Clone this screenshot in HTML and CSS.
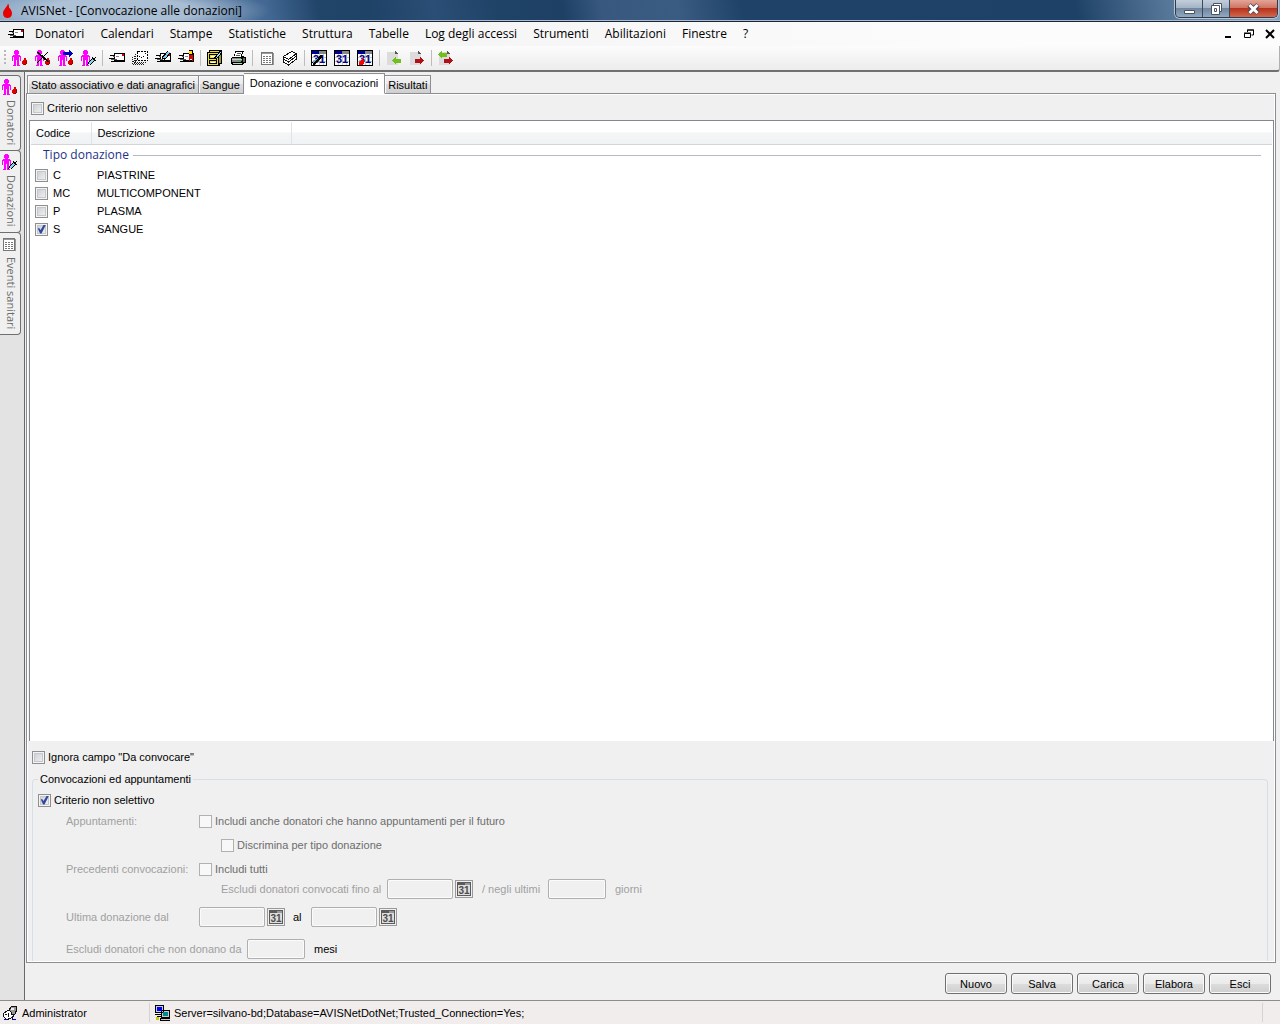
FILE: index.html
```html
<!DOCTYPE html>
<html lang="it">
<head>
<meta charset="utf-8">
<title>AVISNet - [Convocazione alle donazioni]</title>
<link rel="stylesheet" href="styles.css">
</head>
<body>
<svg class="sprite" aria-hidden="true">
  <symbol id="person" viewBox="0 0 16 16">
    <path fill="#f0f" d="M4 0h3v1h1v3h-1v1h-3v-1h-1v-3h1zM2 5h7v1h1v5h-1v-4h-1v8h1v1h-3v-6h-1v6h-3v-1h1v-8h-1v4h-1v-5h1z"/>
  </symbol>
  <symbol id="blood" viewBox="0 0 16 16">
    <path fill="#e00000" d="M13 8h2v2h1v4h-1v1h-3v-1h-1v-3h1v-1h1z"/><path fill="#900" d="M15 11h1v3h-1v1h-2v-1h2z"/>
  </symbol>
  <symbol id="donor" viewBox="0 0 16 16"><use href="#person"/><use href="#blood"/></symbol>
  <symbol id="donor-del" viewBox="0 0 16 16"><use href="#person"/><use href="#blood"/><path stroke="#000" fill="none" d="M3 2l11 10M14 2L3 13M4 2l11 10"/></symbol>
  <symbol id="donor-move" viewBox="0 0 16 16"><use href="#person"/><use href="#blood"/><path fill="#0000b8" d="M6 2h6v-2h1v1h1v1h1v1h1v1h-1v1h-1v1h-1v1h-1v-2h-6z"/></symbol>
  <symbol id="syringe" viewBox="0 0 16 16"><path stroke="#000" stroke-width="4" d="M9 14l5-5"/><path stroke="#7fd4f0" stroke-width="2" d="M9 14l4-4"/><path stroke="#000" d="M7 15l2-2M12 7l4 4M14 9l2-2"/></symbol>
  <symbol id="donor-syringe" viewBox="0 0 16 16"><use href="#person"/><use href="#syringe"/></symbol>
  <symbol id="letter" viewBox="0 0 16 16">
    <path fill="#000" d="M5 3h11v9h-11zM1 5h5v1h-5zM0 8h8v1h-8zM2 11h5v1h-5z"/>
    <path fill="#fff" d="M6 4h9v6h-9z"/><path fill="#555" d="M4 6h2v1h-2zM2 9h6v1h-6z"/>
    <path fill="#888" d="M7 6h3v1h-3z"/><path fill="#c00" d="M13 4h2v2h-2z"/>
  </symbol>
  <symbol id="letters" viewBox="0 0 16 16">
    <path stroke="#222" stroke-dasharray="1 1" fill="none" d="M3.500 4v8.500h10M2 5.500v8h10M.500 7v7.500h11M2 10.500h3M1 11.500h4"/>
    <path fill="#fff" stroke="#000" stroke-dasharray="2 1" d="M5.500 1.500h10v9h-10z"/><path fill="#000" d="M7 6h1v1h-1zM9 7h1v1h-1zM11 6h1v1h-1zM13 3h1v1h-1z"/>
  </symbol>
  <symbol id="letter-pen" viewBox="0 0 16 16"><use href="#letter"/><path stroke="#000" stroke-width="4" d="M8 9l6-7"/><path stroke="#7fc8f0" stroke-width="2" d="M9 8l5-6"/></symbol>
  <symbol id="letter-seal" viewBox="0 0 16 16"><use href="#letter"/><path fill="#d00" d="M11 5h4v6h-1v-2h-2v2h-1z"/><path fill="#000" d="M11 0h4v5h-4z"/><path fill="#fd0" d="M11 1h3v3h-3z"/></symbol>
  <symbol id="cabinet" viewBox="0 0 16 16">
    <path fill="#000" d="M2 0h13v14h-2v2h-13v-14h2z"/><path fill="#e6dc3c" d="M3 1h9v1h-9zM1 3h10v12h-10z"/><path fill="#a39a28" d="M12 3h2v10h-2z"/>
    <path stroke="#000" fill="none" d="M2.500 4.500h7v4h-7zM2.500 10.500h7v3h-7z"/><path fill="#fff" d="M4 6h4v1h-4zM4 12h4v1h-4z"/>
    <path stroke="#000" stroke-width="3" d="M8 9l6-7"/><path stroke="#9be0ff" d="M9 8l5-6"/>
  </symbol>
  <symbol id="printer" viewBox="0 0 16 16">
    <path fill="#000" d="M5 1h9v1h-1l-1 4h2v1h2v6h-2v1h-1v1h-11v-1h-1v-6h1v-1h2z"/><path fill="#fff" d="M6 2h6l-1 5h-7z"/><path fill="#555" d="M7 3h4v1h-4zM6 5h4v1h-4z"/>
    <path fill="#888" d="M2 8h9v4h-9z"/><path fill="#ccc" d="M2 9h10v1h-10zM3 13h9v1h-9z"/><path fill="#0c3" d="M8 10h4v1h-4z"/><path fill="#666" d="M13 8h2v4h-2z"/>
  </symbol>
  <symbol id="sheet" viewBox="0 0 16 16">
    <path fill="#fff" stroke="#777" d="M2.500 2.500h11v12h-11z"/><path stroke="#999" d="M3 3.500h10M14.500 3v12"/><path fill="none" stroke="#777" stroke-dasharray="2 1" d="M4 6.500h8M4 8.500h8M4 10.500h8M4 12.500h8"/>
  </symbol>
  <symbol id="stack" viewBox="0 0 16 16">
    <path fill="#fff" d="M1 6l8-5 6 3v5l-9 6-5-3z"/>
    <path fill="none" stroke="#111" d="M1.500 6.500l8-5 5 2-8 6zM1.500 7v2l5 3 8-6v-2M1.500 10v2l5 3 8-6v-2"/>
  </symbol>
  <symbol id="calendar" viewBox="0 0 16 16">
    <path d="M0 0h16v16h-16z"/><path fill="#fff" d="M1 4h14v11h-14z"/><path fill="#00009a" d="M1 1h7v3h-7z"/><path fill="#888" d="M8 1h7v3h-7z"/>
    <path stroke="#ccc" d="M4.500 4v11M8.500 4v11M12.500 4v11M1 7.500h14M1 11.500h14"/>
  </symbol>
  <symbol id="page" viewBox="0 0 16 16"><path fill="#dcdcdc" d="M1 2h8l3 3v10h-11z"/><path fill="#555" d="M9 1l3 3h-3z"/></symbol>
  <symbol id="page-in" viewBox="0 0 16 16"><use href="#page"/><path fill="#71bf1c" d="M6 10.500l4-4v2h5v4h-5v2z"/></symbol>
  <symbol id="page-out" viewBox="0 0 16 16"><use href="#page"/><path fill="#b01016" d="M15 10.500l-4-4v2h-5v4h5v2z"/></symbol>
  <symbol id="page-both" viewBox="0 0 16 16"><use href="#page"/><path fill="#71bf1c" d="M0 4.500l4-4v2h5v4h-5v2z"/><path fill="#b01016" d="M15 10.500l-4-4v2h-5v4h5v2z"/></symbol>
  <symbol id="calendar-off" viewBox="0 0 14 14">
    <path fill="#5a5a5a" d="M0 0h14v14h-14z"/><path fill="#dedede" d="M1 3h12v10h-12z"/><path fill="#999" d="M8 1h5v2h-5z"/>
  </symbol>
  <symbol id="user" viewBox="0 0 16 16">
    <path fill="#fff" stroke="#111" d="M1.500 8.500l4-3 5 1 1 4-3 3-4 1-3-3z"/><path fill="#999" stroke="#111" d="M7 5l2-3 5-1 1 3-2 5-3 1-1-3z"/><path fill="#eee" d="M9 3h3v2h-3z"/><path stroke="#111" d="M3 9h2M6 8v4M12 10l-2 4"/><path fill="#00c" d="M2 14h3v1h-3zM10 14h4v1h-4z"/>
  </symbol>
  <symbol id="network" viewBox="0 0 16 16">
    <path fill="#ccc" stroke="#000" d="M1.500.500h8v7h-8zM7.500 5.500h8v7h-8zM6 13.500h10v2h-10z"/><path fill="#00f" d="M3 2h5v4h-5z"/><path fill="#008c8c" d="M9 7h5v4h-5z"/><path stroke="#000" d="M1 9.500h6M3 11.500h4"/><path fill="#cc0" d="M2 12h3v3h-3z"/>
  </symbol>
</svg>

<header class="titlebar">
  <svg class="app-icon" viewBox="0 0 12 16"><path fill="#e80000" d="M7 1c-1 4-5 6-5 10 0 6 9 6 9 0 0-3-2-5-3-6 0-1 0-3-1-4z"/></svg>
  <h1>AVISNet - [Convocazione alle donazioni]</h1>
  <div class="window-buttons">
    <button type="button" aria-label="Riduci a icona"><svg width="13" height="14"><path fill="#fff" stroke="#4a5361" d="M1.500 8.500h10v3h-10z"/></svg></button>
    <button type="button" aria-label="Ripristina"><svg width="13" height="14"><path fill="#fff" stroke="#4a5361" d="M3.500 1.500h8v8h-8z"/><path fill="#fff" stroke="#4a5361" d="M1.500 3.500h8v9h-8zM4.500 6.500h2v3h-2z"/></svg></button>
    <button type="button" class="close" aria-label="Chiudi"><svg width="13" height="14"><path stroke="#4a4350" stroke-width="5" d="M2 3l9 8M11 3l-9 8"/><path stroke="#fff" stroke-width="3" d="M2.500 3l8 8M10.500 3l-8 8"/></svg></button>
  </div>
</header>

<nav class="menubar">
  <svg class="icon doc-icon"><use href="#letter"/></svg>
  <button type="button">Donatori</button><button type="button">Calendari</button><button type="button">Stampe</button><button type="button">Statistiche</button><button type="button">Struttura</button><button type="button">Tabelle</button><button type="button">Log degli accessi</button><button type="button">Strumenti</button><button type="button">Abilitazioni</button><button type="button">Finestre</button><button type="button">?</button>
  <div class="child-buttons">
    <button type="button" aria-label="Riduci"><svg width="10" height="10"><path d="M2 7h6v2h-6z"/></svg></button>
    <button type="button" aria-label="Ripristina"><svg width="10" height="10"><path fill="none" stroke="#000" d="M3.500 3v-2h6v5h-2M3 1h7M.500 4.500h6v4h-6zM0 4h7"/></svg></button>
    <button type="button" aria-label="Chiudi"><svg width="10" height="10"><path stroke="#000" stroke-width="2" d="M1 1l8 8M9 1l-8 8"/></svg></button>
  </div>
</nav>

<div class="toolbar" role="toolbar">
  <span class="grip"></span>
  <div class="tools">
    <button type="button" aria-label="Donatore"><svg class="icon"><use href="#donor"/></svg></button>
    <button type="button" aria-label="Elimina donatore"><svg class="icon"><use href="#donor-del"/></svg></button>
    <button type="button" aria-label="Trasferisci donatore"><svg class="icon"><use href="#donor-move"/></svg></button>
    <button type="button" aria-label="Donazione"><svg class="icon"><use href="#donor-syringe"/></svg></button>
  </div>
  <div class="tools">
    <button type="button" aria-label="Lettera"><svg class="icon"><use href="#letter"/></svg></button>
    <button type="button" aria-label="Lettere"><svg class="icon"><use href="#letters"/></svg></button>
    <button type="button" aria-label="Scrivi lettera"><svg class="icon"><use href="#letter-pen"/></svg></button>
    <button type="button" aria-label="Benemerenze"><svg class="icon"><use href="#letter-seal"/></svg></button>
  </div>
  <div class="tools">
    <button type="button" aria-label="Archivio"><svg class="icon"><use href="#cabinet"/></svg></button>
    <button type="button" aria-label="Stampa"><svg class="icon"><use href="#printer"/></svg></button>
  </div>
  <div class="tools">
    <button type="button" aria-label="Elenco"><svg class="icon"><use href="#sheet"/></svg></button>
    <button type="button" aria-label="Schede"><svg class="icon"><use href="#stack"/></svg></button>
  </div>
  <div class="tools">
    <button type="button" aria-label="Modifica calendario"><svg class="icon"><use href="#calendar"/><text class="cal-day" x="8" y="13" text-anchor="middle">31</text><path stroke="#000" stroke-width="3" d="M2 14l9-8"/><path stroke="#3cc" d="M2 13l5-5"/></svg></button>
    <button type="button" aria-label="Calendario"><svg class="icon"><use href="#calendar"/><text class="cal-day" x="8" y="13" text-anchor="middle">31</text></svg></button>
    <button type="button" aria-label="Calendario donazioni"><svg class="icon"><use href="#calendar"/><text class="cal-day" x="8" y="13" text-anchor="middle">31</text><path fill="#f00" d="M5 8h1v2h1v4h-1v1h-4v-3h1v-1h1v-1h1z"/></svg></button>
  </div>
  <div class="tools">
    <button type="button" aria-label="Importa"><svg class="icon"><use href="#page-in"/></svg></button>
    <button type="button" aria-label="Esporta"><svg class="icon"><use href="#page-out"/></svg></button>
  </div>
  <div class="tools">
    <button type="button" aria-label="Scambia"><svg class="icon"><use href="#page-both"/></svg></button>
  </div>
</div>

<div class="workspace">
  <aside class="side-tabs">
    <button type="button"><svg class="icon"><use href="#donor"/></svg><span>Donatori</span></button>
    <button type="button"><svg class="icon"><use href="#donor-syringe"/></svg><span>Donazioni</span></button>
    <button type="button"><svg class="icon"><use href="#sheet"/></svg><span>Eventi sanitari</span></button>
  </aside>

  <main class="child-window">
    <div class="tabs" role="tablist">
      <button type="button" role="tab">Stato associativo e dati anagrafici</button><button type="button" role="tab">Sangue</button><button type="button" role="tab" class="active" aria-selected="true">Donazione e convocazioni</button><button type="button" role="tab">Risultati</button>
    </div>
    <section class="tab-page">
      <label class="check top-check"><input type="checkbox">Criterio non selettivo</label>
      <div class="list">
        <table>
          <thead><tr><th class="code">Codice</th><th class="desc">Descrizione</th><th></th></tr></thead>
          <tbody>
            <tr class="group"><td colspan="3"><div>Tipo donazione</div></td></tr>
            <tr><td><label class="check"><input type="checkbox">C</label></td><td>PIASTRINE</td><td></td></tr>
            <tr><td><label class="check"><input type="checkbox">MC</label></td><td>MULTICOMPONENT</td><td></td></tr>
            <tr><td><label class="check"><input type="checkbox">P</label></td><td>PLASMA</td><td></td></tr>
            <tr><td><label class="check"><input type="checkbox" checked>S</label></td><td>SANGUE</td><td></td></tr>
          </tbody>
        </table>
      </div>
      <label class="check ignore-check"><input type="checkbox">Ignora campo "Da convocare"</label>
      <fieldset>
        <legend>Convocazioni ed appuntamenti</legend>
        <label class="check"><input type="checkbox" checked>Criterio non selettivo</label>
        <div class="criteria">
          <div class="row"><span class="caption">Appuntamenti:</span><label class="check"><input type="checkbox" disabled>Includi anche donatori che hanno appuntamenti per il futuro</label></div>
          <div class="row sub"><label class="check"><input type="checkbox" disabled>Discrimina per tipo donazione</label></div>
          <div class="row"><span class="caption">Precedenti convocazioni:</span><label class="check"><input type="checkbox" disabled>Includi tutti</label></div>
          <div class="row fields sub-fields">
            <label class="until" for="until">Escludi donatori convocati fino al</label>
            <input id="until" class="date" type="text" disabled><button type="button" class="pick" disabled aria-label="Scegli data"><svg><use href="#calendar-off"/><text class="cal-day-off" x="7" y="12" text-anchor="middle">31</text></svg></button>
            <label class="days" for="days">/ negli ultimi</label><input id="days" class="number" type="text" disabled><span class="unit">giorni</span>
          </div>
          <div class="row fields last">
            <label class="caption" for="from">Ultima donazione dal</label>
            <input id="from" class="date" type="text" disabled><button type="button" class="pick" disabled aria-label="Scegli data"><svg><use href="#calendar-off"/><text class="cal-day-off" x="7" y="12" text-anchor="middle">31</text></svg></button>
            <label class="to" for="to">al</label><input id="to" class="date" type="text" disabled><button type="button" class="pick" disabled aria-label="Scegli data"><svg><use href="#calendar-off"/><text class="cal-day-off" x="7" y="12" text-anchor="middle">31</text></svg></button>
          </div>
          <div class="row fields months">
            <label class="not-since" for="months">Escludi donatori che non donano da</label><input id="months" class="number" type="text" disabled><span class="unit on">mesi</span>
          </div>
        </div>
      </fieldset>
    </section>
    <div class="actions">
      <button type="button">Nuovo</button><button type="button">Salva</button><button type="button">Carica</button><button type="button">Elabora</button><button type="button">Esci</button>
    </div>
  </main>
</div>

<footer class="statusbar">
  <div class="user"><svg class="icon"><use href="#user"/></svg>Administrator</div>
  <div class="server"><svg class="icon"><use href="#network"/></svg>Server=silvano-bd;Database=AVISNetDotNet;Trusted_Connection=Yes;</div>
  <div class="end"></div>
</footer>
</body>
</html>
```

FILE: styles.css
```css
* { box-sizing: border-box; }

body {
  margin: 0;
  min-height: 100vh;
  display: flex;
  flex-direction: column;
  background: #f0f0f0;
  color: #000;
  font: 11px/14px "Liberation Sans", Arial, sans-serif;
}

button { margin: 0; padding: 0; border: 0; background: none; color: inherit; font: inherit; }
svg { display: block; flex: none; }
.sprite { display: none; }
.icon { width: 16px; height: 16px; shape-rendering: crispEdges; }
.cal-day { font: bold 11px "Liberation Sans", sans-serif; fill: #00008c; }
.cal-day-off { font: bold 10px "Liberation Sans", sans-serif; fill: #4c4c4c; }

/* Title bar */
.titlebar {
  display: flex;
  align-items: center;
  height: 22px;
  padding-left: 1px;
  border-bottom: 1px solid #1b2535;
  box-shadow: inset 0 -1px #a9bdd2;
  background:
    radial-gradient(ellipse 150px 26px at 120px 11px, rgba(190, 207, 224, .8) 50%, rgba(190, 207, 224, 0)),
    linear-gradient(80deg, #7f9dbe 0, #54779f 14%, #426893 21%, #214469 25%, #1f4267 29%, #2b4e76 34%, #1f4267 39%, #1e4065 44%, #38587f 47%, #3a5b82 53%, #1f4368 58%, #1e4267 84%, #567698 91%, #8ba5be 100%);
}
.app-icon { width: 12px; height: 17px; }
.titlebar h1 { flex: 1; margin: 0 0 0 8px; font: 12px/20px "Open Sans", "Noto Sans", sans-serif; }
.window-buttons {
  display: flex;
  align-self: flex-start;
  height: 18px;
  margin-right: 2px;
  border: 1px solid #2d3b4d;
  border-top: 0;
  border-radius: 0 0 5px 5px;
  overflow: hidden;
  box-shadow: 0 0 0 1px #b7c6d6;
}
.window-buttons button {
  display: grid;
  place-items: center;
  width: 27px;
  border-right: 1px solid #3b4b5e;
  background: linear-gradient(#c3cedb 0, #a5b4c6 45%, #71869f 50%, #93a9bf 100%);
}
.window-buttons .close { width: 47px; border-right: 0; background: linear-gradient(#e3a597 0, #cf7463 45%, #b8321c 50%, #d1694c 100%); }

/* Menu */
.menubar {
  display: flex;
  align-items: center;
  height: 24px;
  padding: 0 5px 0 8px;
  background: linear-gradient(90deg, #f0f0f0, #fcfcfc 80%);
  font: 12px/22px "Open Sans", "Noto Sans", sans-serif;
}
.menubar > button { padding: 0 8px; }
.doc-icon { margin-right: 3px; }
.child-buttons { display: flex; gap: 11px; margin-left: auto; }

/* Toolbar */
.toolbar {
  display: flex;
  align-items: center;
  height: 26px;
  padding-left: 4px;
  border-bottom: 2px solid #707070;
  border-right: 1px solid #b0b0b0;
  border-radius: 0 0 3px 0;
  background: linear-gradient(#fcfcfc, #ececec);
}
.grip { width: 2px; height: 16px; background: repeating-linear-gradient(#b8b8b8 0 2px, transparent 2px 4px); }
.tools { display: flex; gap: 7px; padding: 0 6px 0 5px; }
.tools + .tools { padding-left: 6px; border-left: 1px solid #bdbdbd; }

/* Workspace */
.workspace { flex: 1; display: flex; }
.side-tabs { width: 24px; padding-top: 3px; background: #e3e3e3; }
.side-tabs button {
  display: flex;
  flex-direction: column;
  align-items: flex-end;
  gap: 5px;
  width: 21px;
  height: 76px;
  padding: 3px 1px 0 0;
  border: 1px solid #6f6f6f;
  border-left: 0;
  border-radius: 0 4px 4px 0;
  background: #f0f0f0;
  color: #6b6b6b;
  font: 11px/16px "Open Sans", "Noto Sans", sans-serif;
}
.side-tabs button + button { height: 83px; margin-top: -1px; }
.side-tabs button:last-child { height: 103px; }
.side-tabs .icon { align-self: flex-start; margin-left: 1px; }
.side-tabs span { writing-mode: vertical-rl; white-space: nowrap; }

.child-window {
  flex: 1;
  display: flex;
  flex-direction: column;
  min-width: 0;
  padding: 1px 4px 6px 1px;
  border-left: 1px solid #696969;
}
.tabs { display: flex; align-items: flex-end; height: 21px; padding-left: 1px; position: relative; z-index: 1; }
.tabs button {
  height: 19px;
  padding: 0 3px;
  border: 1px solid #8c8e94;
  border-left: 0;
  background: linear-gradient(#f2f2f2 0, #ebebeb 50%, #dcdcdc 50%, #cfcfcf);
  box-shadow: inset 1px 1px #fafafa;
  white-space: nowrap;
}
.tabs button:first-child { border-left: 1px solid #8c8e94; }
.tabs .active { height: 21px; padding: 0 6px 2px; border-bottom-color: #fff; background: #fff; }

.tab-page {
  flex: 1;
  display: flex;
  flex-direction: column;
  margin-top: -1px;
  padding: 5px 1px 1px 2px;
  border: 1px solid #8c8e94;
  box-shadow: inset 0 0 0 1px #fff;
}
.check { display: flex; align-items: center; gap: 3px; height: 18px; white-space: nowrap; }
.top-check { padding-left: 2px; margin-bottom: 3px; }
.check input {
  appearance: none;
  flex: none;
  width: 13px;
  height: 13px;
  margin: 0;
  border: 1px solid #8e8f8f;
  background: linear-gradient(135deg, #c6cacf, #f6f6f6);
  box-shadow: inset 0 0 0 1px #f4f4f4, inset 0 0 0 2px #c4c8cc;
}
.check input:checked::before {
  content: "";
  display: block;
  width: 9px;
  height: 9px;
  margin: 1px;
  background: #31479a;
  clip-path: polygon(8% 42%, 26% 42%, 40% 62%, 76% 0, 100% 0, 50% 100%, 34% 100%);
}
.check input:disabled { border-color: #b1b1b1; background: #f8f8f8; box-shadow: none; }
.check:has(:disabled) { color: #6d6d6d; }

.list { flex: 1; border: 1px solid #828790; border-bottom: 0; padding: 1px; background: #fff; }
.list table { width: 100%; table-layout: fixed; border-collapse: collapse; }
.list th {
  height: 22px;
  padding: 0 6px;
  border-right: 1px solid #dfe3e8;
  border-bottom: 1px solid #d5d5d5;
  background: linear-gradient(#fff 45%, #f4f5f6 50%, #f1f2f4);
  font-weight: normal;
  text-align: left;
}
.list th:last-child { border-right: 0; }
.list .code { width: 60px; padding-left: 5px; }
.list .desc { width: 200px; }
.list td { height: 18px; padding: 0 6px; }
.list td:first-child { padding: 0 0 0 4px; }
.list .check { gap: 5px; }
.list .group td { height: 22px; padding: 0 11px 0 12px; }
.group div { display: flex; align-items: center; gap: 4px; color: #1e3287; font: 12px/20px "Open Sans", "Noto Sans", sans-serif; }
.group div::after { content: ""; flex: 1; height: 1px; background: #b4b9c4; }

.ignore-check { height: 16px; margin: 8px 0 7px 3px; }
fieldset {
  min-width: 0;
  margin: 0 6px 0 3px;
  padding: 5px 5px 2px;
  border: 1px solid #d5dfe5;
  border-bottom: 0;
  border-radius: 4px 4px 0 0;
}
legend { padding: 0 2px; }

.criteria { padding-left: 28px; color: #a0a0a0; }
.row { display: flex; align-items: center; height: 24px; white-space: nowrap; }
.caption { width: 133px; }
.sub { padding-left: 155px; }
.fields { height: 20px; }
.sub-fields { margin-top: -2px; padding-left: 155px; }
.last { margin-top: 8px; }
.months { margin-top: 12px; }
.until { width: 166px; }
.days { width: 75px; padding-left: 9px; }
.to { width: 26px; padding-left: 8px; color: #000; }
.not-since { width: 181px; }
.unit { padding-left: 9px; }
.on { color: #000; }
.fields input { height: 20px; border: 1px solid #afafaf; border-radius: 2px; background: #f0f0f0; box-shadow: inset 0 0 0 1px #fbfbfb; }
.date { width: 66px; }
.number { width: 58px; }
.pick { width: 18px; height: 18px; margin-left: 2px; padding: 1px; border: 1px solid #999; }
.pick svg { width: 14px; height: 14px; }

.actions { display: flex; justify-content: flex-end; gap: 4px; padding: 10px 5px 0 0; }
.actions button {
  width: 62px;
  height: 21px;
  border: 1px solid #707070;
  border-radius: 3px;
  background: linear-gradient(#f2f2f2 0, #ebebeb 50%, #dddddd 50%, #cfcfcf);
  box-shadow: inset 0 0 0 1px #fafafa;
}

/* Status bar */
.statusbar { display: flex; height: 24px; padding: 2px 0; border-top: 1px solid #8c8c8c; background: #f1edec; white-space: nowrap; }
.statusbar div { display: flex; align-items: center; gap: 4px; border-right: 1px solid #d5d2d0; }
.statusbar .user { width: 150px; padding-left: 2px; }
.statusbar .server { flex: 1; padding-left: 4px; }
.statusbar .end { width: 17px; border-right: 0; }
```
